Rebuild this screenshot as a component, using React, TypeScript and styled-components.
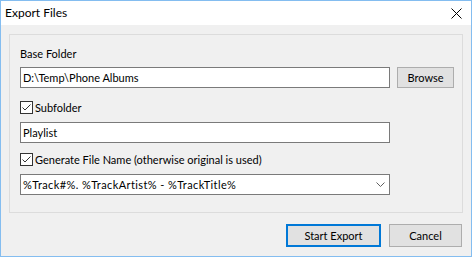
import React from 'react';
import styled, { createGlobalStyle } from 'styled-components';

const GlobalStyle = createGlobalStyle`
  html, body {
    margin: 0;
    padding: 0;
    background: #ffffff;
  }
  body {
    font-family: Lato, 'Noto Sans', sans-serif;
    font-size: 11px;
    color: #000000;
  }
`;

const Window = styled.div`
  box-sizing: border-box;
  width: 472px;
  height: 257px;
  border: 1px solid #84bdf0;
  display: flex;
  flex-direction: column;
  background: #f0f0f0;
`;

const TitleBar = styled.div`
  height: 24px;
  background: #ffffff;
  display: flex;
  align-items: center;
  justify-content: space-between;
  padding: 0 9px 0 4px;
`;

const Title = styled.span`
  font-size: 12px;
  line-height: 16px;
  margin-top: -1px;
`;

const CloseIcon = () => (
  <svg width="11" height="11" viewBox="0 0 11 11">
    <path d="M0.5 0.5 L10.5 10.5 M10.5 0.5 L0.5 10.5" stroke="#000" strokeWidth="1" />
  </svg>
);

const Body = styled.div`
  flex: 1;
  display: flex;
  flex-direction: column;
  padding: 9px 8px 0 8px;
`;

const GroupBox = styled.div`
  box-sizing: border-box;
  height: 179px;
  border: 1px solid #dcdcdc;
  padding: 11px 8px 0 10px;
  display: flex;
  flex-direction: column;
`;

const Label = styled.div`
  line-height: 16px;
  height: 16px;
`;

const FieldRow = styled.div<{ $gap?: number }>`
  display: flex;
  align-items: center;
  gap: 7px;
  margin-top: ${(p) => p.$gap ?? 0}px;
`;

const TextBox = styled.div<{ $gap?: number }>`
  box-sizing: border-box;
  width: 370px;
  height: 21px;
  border: 1px solid #7a7a7a;
  background: #ffffff;
  padding: 0 2px;
  line-height: 19px;
  white-space: nowrap;
  overflow: hidden;
  margin-top: ${(p) => p.$gap ?? 0}px;
`;

const ComboBox = styled(TextBox)`
  display: flex;
  align-items: center;
  justify-content: space-between;
  padding-right: 4px;
`;

const ComboText = styled.span`
  letter-spacing: 0.4px;
`;

const Chevron = () => (
  <svg width="9" height="5" viewBox="0 0 9 5">
    <path d="M0.5 0.5 L4.5 4.5 L8.5 0.5" fill="none" stroke="#606060" strokeWidth="1" />
  </svg>
);

const Button = styled.div<{ $width: number; $height: number; $default?: boolean }>`
  box-sizing: border-box;
  width: ${(p) => p.$width}px;
  height: ${(p) => p.$height}px;
  background: #e1e1e1;
  border: ${(p) => (p.$default ? '2px solid #0078d7' : '1px solid #adadad')};
  display: flex;
  align-items: center;
  justify-content: center;
  line-height: 16px;
`;

const CheckRow = styled.label<{ $gap: number }>`
  display: flex;
  align-items: center;
  gap: 2px;
  height: 15px;
  margin-top: ${(p) => p.$gap}px;
`;

const CheckBox = styled.span`
  box-sizing: border-box;
  width: 13px;
  height: 13px;
  border: 1px solid #333333;
  background: #ffffff;
  display: flex;
  align-items: center;
  justify-content: center;
`;

const CheckMark = () => (
  <svg width="11" height="11" viewBox="0 0 11 11">
    <path d="M1.5 5.5 L4 8 L9.5 2.5" fill="none" stroke="#333" strokeWidth="1" />
  </svg>
);

const Footer = styled.div`
  display: flex;
  justify-content: flex-end;
  gap: 8px;
  margin-top: 11px;
  padding-right: 1px;
`;

const Check = ({ label, gap }: { label: string; gap: number }) => (
  <CheckRow $gap={gap}>
    <CheckBox>
      <CheckMark />
    </CheckBox>
    <span>{label}</span>
  </CheckRow>
);

export default function App() {
  return (
    <>
      <GlobalStyle />
      <Window>
        <TitleBar>
          <Title>Export Files</Title>
          <CloseIcon />
        </TitleBar>
        <Body>
          <GroupBox>
            <Label>Base Folder</Label>
            <FieldRow $gap={5}>
              <TextBox>D:\Temp\Phone Albums</TextBox>
              <Button $width={57} $height={21}>Browse</Button>
            </FieldRow>
            <Check label="Subfolder" gap={12} />
            <TextBox $gap={7}>Playlist</TextBox>
            <Check label="Generate File Name (otherwise original is used)" gap={9} />
            <ComboBox $gap={7}>
              <ComboText>%Track#%. %TrackArtist% - %TrackTitle%</ComboText>
              <Chevron />
            </ComboBox>
          </GroupBox>
          <Footer>
            <Button $width={95} $height={23} $default>Start Export</Button>
            <Button $width={73} $height={23}>Cancel</Button>
          </Footer>
        </Body>
      </Window>
    </>
  );
}
